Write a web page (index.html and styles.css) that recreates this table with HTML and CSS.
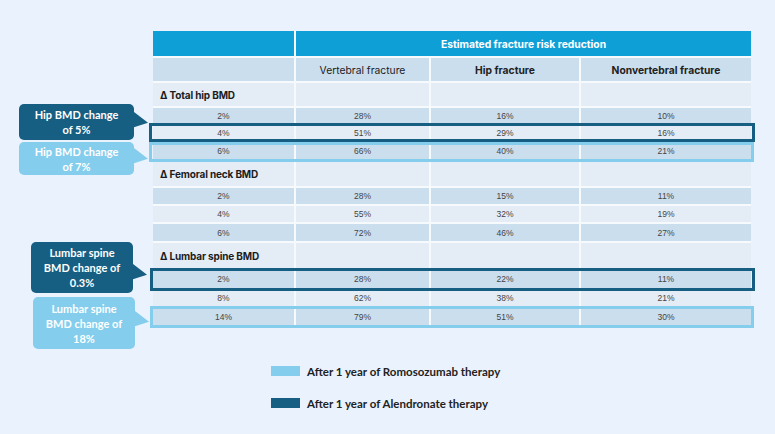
FILE: index.html
```html
<!DOCTYPE html>
<html lang="en">
<head>
<meta charset="utf-8">
<title>Estimated fracture risk reduction</title>
<link rel="stylesheet" href="styles.css">
</head>
<body>
<div class="page">
  <div class="grid">
    <div class="c head"></div>
    <div class="c head span3">Estimated fracture risk reduction</div>

    <div class="c dk"></div>
    <div class="c dk colh">Vertebral fracture</div>
    <div class="c dk colh b">Hip fracture</div>
    <div class="c dk colh b">Nonvertebral fracture</div>

    <div class="c lt sec r23">Δ Total hip BMD</div><div class="c lt"></div><div class="c lt"></div><div class="c lt"></div>
    <div class="c dk n r15">2%</div><div class="c dk n">28%</div><div class="c dk n">16%</div><div class="c dk n">10%</div>
    <div class="c lt n r16">4%</div><div class="c lt n">51%</div><div class="c lt n">29%</div><div class="c lt n">16%</div>
    <div class="c dk n r16">6%</div><div class="c dk n">66%</div><div class="c dk n">40%</div><div class="c dk n">21%</div>

    <div class="c lt sec r25">Δ Femoral neck BMD</div><div class="c lt"></div><div class="c lt"></div><div class="c lt"></div>
    <div class="c dk n r16">2%</div><div class="c dk n">28%</div><div class="c dk n">15%</div><div class="c dk n">11%</div>
    <div class="c lt n r16">4%</div><div class="c lt n">55%</div><div class="c lt n">32%</div><div class="c lt n">19%</div>
    <div class="c dk n r17">6%</div><div class="c dk n">72%</div><div class="c dk n">46%</div><div class="c dk n">27%</div>

    <div class="c lt sec r25">Δ Lumbar spine BMD</div><div class="c lt"></div><div class="c lt"></div><div class="c lt"></div>
    <div class="c dk n r18">2%</div><div class="c dk n">28%</div><div class="c dk n">22%</div><div class="c dk n">11%</div>
    <div class="c lt n r16">8%</div><div class="c lt n">62%</div><div class="c lt n">38%</div><div class="c lt n">21%</div>
    <div class="c dk n r17">14%</div><div class="c dk n">79%</div><div class="c dk n">51%</div><div class="c dk n">30%</div>
  </div>

  <div class="legend">
    <div class="leg"><span class="sw sw-light"></span>After 1 year of Romosozumab therapy</div>
    <div class="leg"><span class="sw sw-dark"></span>After 1 year of Alendronate therapy</div>
  </div>

  <div class="box box-dark hb1"></div>
  <div class="box box-light hb2"></div>
  <div class="box box-dark lb1"></div>
  <div class="box box-light lb2"></div>

  <div class="call call-dark c1">Hip BMD change<br>of 5%</div>
  <div class="call call-light c2">Hip BMD change<br>of 7%</div>
  <div class="call call-dark c3">Lumbar spine<br>BMD change of<br>0.3%</div>
  <div class="call call-light c4">Lumbar spine<br>BMD change of<br>18%</div>
</div>
</body>
</html>
```

FILE: styles.css
```css
* { box-sizing: border-box; }
html, body { margin: 0; padding: 0; }
body { background: #eaf3fd; }
.page {
  position: relative;
  width: 775px;
  height: 434px;
  padding: 31px 0 0 153px;
  font-family: Inter, "Open Sans", sans-serif;
}
.grid {
  display: grid;
  width: 598px;
  grid-template-columns: 141px 133px 148px 170px;
  grid-auto-rows: auto;
  gap: 2px;
  background: #f7fafd;
}
.c {
  display: flex;
  align-items: center;
  justify-content: center;
  min-width: 0;
}
.head {
  background: #0f9fd7;
  height: 25px;
  color: #fff;
  font-weight: 700;
  font-size: 10.3px;
}
.span3 { grid-column: span 3; }
.dk { background: #cbdeee; }
.lt { background: #e4edf6; }
.colh { height: 23px; font-size: 10.3px; color: #222; }
.b { font-weight: 700; }
.sec {
  justify-content: flex-start;
  padding-left: 7px;
  font-weight: 700;
  font-size: 10px;
  color: #1c1c1c;
  letter-spacing: -0.15px;
  white-space: nowrap;
}
.r15 { height: 15px; }
.r16 { height: 16px; }
.r17 { height: 17px; }
.r18 { height: 18px; }
.r23 { height: 23px; }
.r25 { height: 25px; }
.n {
  font-family: "Liberation Sans", Arial, sans-serif;
  font-size: 8.5px;
  color: #444;
}
.legend {
  margin: 36px 0 0 118px;
  display: flex;
  flex-direction: column;
  gap: 12px;
  font-family: Lato, "Open Sans", sans-serif;
  font-weight: 700;
  font-size: 11.5px;
  color: #222;
}
.leg { display: flex; align-items: center; gap: 7px; height: 20px; }
.sw { width: 29px; height: 10px; display: block; }
.sw-light { background: #84cdec; }
.sw-dark { background: #165e82; }

.box { position: absolute; border: 3px solid; }
.box-dark { border-color: #165e82; }
.box-light { border-color: #84cdec; }
.hb1 { left: 149px; top: 123px; width: 606px; height: 19px; }
.hb2 { left: 149px; top: 142px; width: 605px; height: 20px; }
.lb1 { left: 150px; top: 268px; width: 605px; height: 23px; }
.lb2 { left: 150px; top: 306px; width: 604px; height: 22px; }

.call {
  position: absolute;
  border-radius: 5px;
  color: #fff;
  font-family: Lato, "Open Sans", sans-serif;
  font-weight: 700;
  font-size: 11px;
  line-height: 15px;
  text-align: center;
  display: flex;
  align-items: center;
  justify-content: center;
}
.call::after {
  content: "";
  position: absolute;
  left: 100%;
  width: 14px;
  height: 18px;
  background: inherit;
  clip-path: polygon(0 0, 100% 60%, 0 85%);
}
.call-dark { background: #165e82; }
.call-light { background: #84cdec; }
.c1 { left: 19px; top: 104px; width: 115px; height: 36px; }
.c1::after { top: 8px; }
.c2 { left: 19px; top: 142px; width: 115px; height: 33px; }
.c2::after { top: 6px; }
.c3 { left: 31px; top: 242px; width: 102px; height: 51px; }
.c3::after { top: 22px; }
.c4 { left: 33px; top: 297px; width: 102px; height: 52px; }
.c4::after { top: 14px; }
```
